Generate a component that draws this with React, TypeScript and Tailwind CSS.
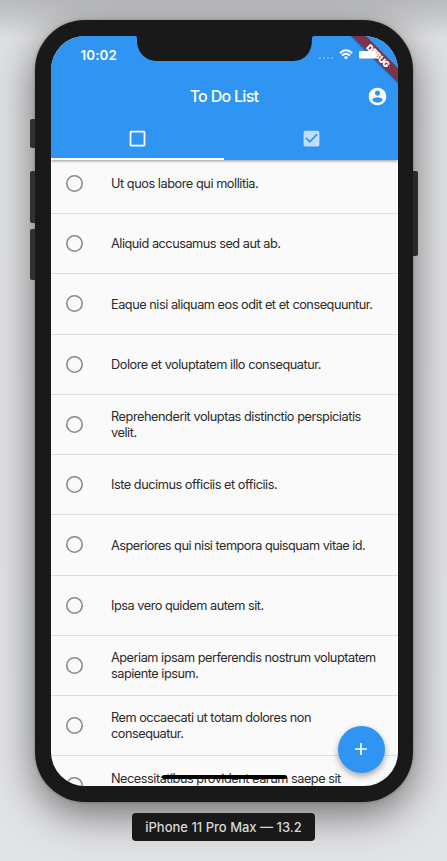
const tasks = [
  { lines: ["Ut quos labore qui mollitia."], tracking: "tracking-[-0.46px]" },
  { lines: ["Aliquid accusamus sed aut ab."], tracking: "tracking-[-0.49px]" },
  { lines: ["Eaque nisi aliquam eos odit et et consequuntur."], tracking: "tracking-[-0.485px]" },
  { lines: ["Dolore et voluptatem illo consequatur."], tracking: "tracking-[-0.475px]" },
  { lines: ["Reprehenderit voluptas distinctio perspiciatis", "velit."], tracking: "tracking-[-0.46px]" },
  { lines: ["Iste ducimus officiis et officiis."], tracking: "tracking-[-0.47px]" },
  { lines: ["Asperiores qui nisi tempora quisquam vitae id."], tracking: "tracking-[-0.52px]" },
  { lines: ["Ipsa vero quidem autem sit."], tracking: "tracking-[-0.49px]" },
  { lines: ["Aperiam ipsam perferendis nostrum voluptatem", "sapiente ipsum."], tracking: "tracking-[-0.495px]" },
  { lines: ["Rem occaecati ut totam dolores non", "consequatur."], tracking: "tracking-[-0.5px]" },
  { lines: ["Necessitatibus provident earum saepe sit", ""], tracking: "tracking-[-0.485px]" },
];

function StatusBar() {
  return (
    <div className="relative h-[38px]">
      <span className="absolute left-[30px] top-[11px] text-[13.3px] leading-4 font-semibold tracking-[0.15px] whitespace-nowrap">10:02</span>
      <svg className="absolute left-[84px] top-0" width="180" height="25" viewBox="-2 0 180 25">
        <path d="M-2 0 Q0 0 0 2 V4 C0 16 8 25 20 25 H156 C168 25 175 16 175 4 V2 Q175 0 177 0Z" fill="#191919" />
      </svg>
      <div className="absolute left-[268px] top-[21px] flex gap-[2px]">
        {[0, 1, 2, 3].map((dot) => (
          <i key={dot} className="size-[2px] rounded-full bg-white/40" />
        ))}
      </div>
      <svg className="absolute left-[288px] top-[13px]" width="14" height="11" viewBox="0 0 14 11" fill="none" stroke="white" strokeWidth="1.9">
        <path d="M.8 4.1 Q7-1.7 13.2 4.1M3 6.5 Q7 2.8 11 6.5" />
        <path d="M4.8 8.2 Q7 6.5 9.2 8.2 L7 10.5Z" fill="white" stroke="none" />
      </svg>
    </div>
  );
}

function Header() {
  return (
    <header className="relative z-10 h-[124px] shrink-0 bg-[#3095f2] text-white shadow-[0_1px_3px_rgba(0,0,0,0.4)]">
      <StatusBar />
      <div className="relative flex h-[45px] items-center justify-center">
        <h1 className="-mt-px text-[16px] leading-5 font-medium tracking-[-0.7px]">To Do List</h1>
        <svg className="absolute top-[12px] right-[9.5px]" width="21" height="21" viewBox="0 0 24 24" fill="white">
          <path d="M12 2C6.48 2 2 6.48 2 12s4.48 10 10 10 10-4.48 10-10S17.52 2 12 2zm0 3c1.66 0 3 1.34 3 3s-1.34 3-3 3-3-1.34-3-3 1.34-3 3-3zm0 14.2c-2.5 0-4.71-1.28-6-3.22.03-1.99 4-3.08 6-3.08 1.99 0 5.97 1.09 6 3.08-1.29 1.94-3.5 3.22-6 3.22z" />
        </svg>
      </div>
      <div className="flex h-[41px]">
        <div className="flex w-[173.5px] items-center justify-center border-b-2 border-white">
          <svg width="21" height="21" viewBox="0 0 24 24" fill="white">
            <path d="M19 5v14H5V5h14m0-2H5c-1.1 0-2 .9-2 2v14c0 1.1.9 2 2 2h14c1.1 0 2-.9 2-2V5c0-1.1-.9-2-2-2z" />
          </svg>
        </div>
        <div className="flex w-[173.5px] items-center justify-center border-b-2 border-transparent pl-[1.5px]">
          <svg width="21" height="21" viewBox="0 0 24 24" fill="white" opacity=".7">
            <path d="M19 3H5c-1.11 0-2 .9-2 2v14c0 1.1.89 2 2 2h14c1.11 0 2-.9 2-2V5c0-1.1-.89-2-2-2zm-9 14l-5-5 1.41-1.41L10 14.17l7.59-7.59L19 8l-9 9z" />
          </svg>
        </div>
      </div>
      <svg className="absolute top-0 right-0" width="60" height="60" viewBox="338 36 60 60">
        <g transform="rotate(45 378.5 55.5)">
          <rect x="338" y="51.2" width="82" height="10.6" fill="#000" opacity=".1" />
          <rect x="338" y="50.5" width="82" height="9.9" fill="#7d344b" />
          <rect x="338" y="60.4" width="82" height="1.5" fill="#000" opacity=".18" />
        </g>
        <rect x="359" y="51" width="17.5" height="7.4" rx="1" fill="white" />
        <text x="378" y="59" textAnchor="middle" transform="rotate(45 378 56)" fill="white" fontFamily="Inter, sans-serif" fontSize="8.6" fontWeight="900" letterSpacing="-.25">DEBUG</text>
      </svg>
    </header>
  );
}

export default function App() {
  return (
    <main className="relative flex h-[861px] w-[447px] flex-col items-center overflow-hidden bg-[linear-gradient(180deg,#b9babc_0px,#c6c7c9_16px,#dfe0e2_38px,#e2e3e5_100%)] pt-[20px] font-['Inter','Liberation_Sans',sans-serif]">
      <div className="relative h-[782px] w-[378px] shrink-0 rounded-[50px] bg-[#191919] p-[16px] pr-[15px] shadow-[0_0_3px_rgba(0,0,0,0.3),0_12px_40px_rgba(0,0,0,0.52)]">
        <i className="absolute top-[99px] -left-[5px] h-[29px] w-[5px] rounded-l-[2px] bg-[#303030]" />
        <i className="absolute top-[151px] -left-[5px] h-[52px] w-[5px] rounded-l-[2px] bg-[#303030]" />
        <i className="absolute top-[209px] -left-[5px] h-[51px] w-[5px] rounded-l-[2px] bg-[#303030]" />
        <i className="absolute top-[151px] -right-[5px] h-[85px] w-[5px] rounded-r-[2px] bg-[#292929]" />
        <div className="relative flex h-[750px] flex-col overflow-hidden rounded-[34px] bg-[#fafafa]">
          <Header />
          <ul className="-mt-[6.3px] shrink-0 text-[#2b2b2b]">
            {tasks.map((task) => (
              <li key={task.lines[0]} className="flex h-[60.28px] items-center border-b border-[#dedede] pl-[15px]">
                <svg className="shrink-0" width="17" height="17" viewBox="0 0 17 17" fill="none" stroke="#888" strokeWidth="1.6">
                  <circle cx="8.5" cy="8.5" r="7.7" />
                </svg>
                <div className={`ml-[28.5px] pt-[1.5px] text-[12.75px] leading-[16px] whitespace-nowrap ${task.tracking}`}>
                  {task.lines.map((line) => (
                    <p key={line} className="min-h-4">{line}</p>
                  ))}
                </div>
              </li>
            ))}
          </ul>
          <button className="absolute right-[13px] bottom-[13px] flex size-[47px] items-center justify-center rounded-full bg-[#3095f2] shadow-[0_3px_6px_rgba(0,0,0,0.35)]">
            <svg className="-mt-px" width="12" height="12" viewBox="0 0 12 12" stroke="white" strokeWidth="1.7">
              <path d="M6 0v12M0 6h12" />
            </svg>
          </button>
          <i className="absolute bottom-[7px] left-[111px] h-[4px] w-[125px] rounded-full bg-black" />
        </div>
      </div>
      <div className="relative mt-[11px] flex h-[28px] w-[183px] items-center justify-center rounded-[4px] bg-[#191919] pt-px text-[13px] font-medium whitespace-nowrap text-[#d8d8d8]">
        iPhone 11 Pro Max — 13.2
      </div>
    </main>
  );
}
